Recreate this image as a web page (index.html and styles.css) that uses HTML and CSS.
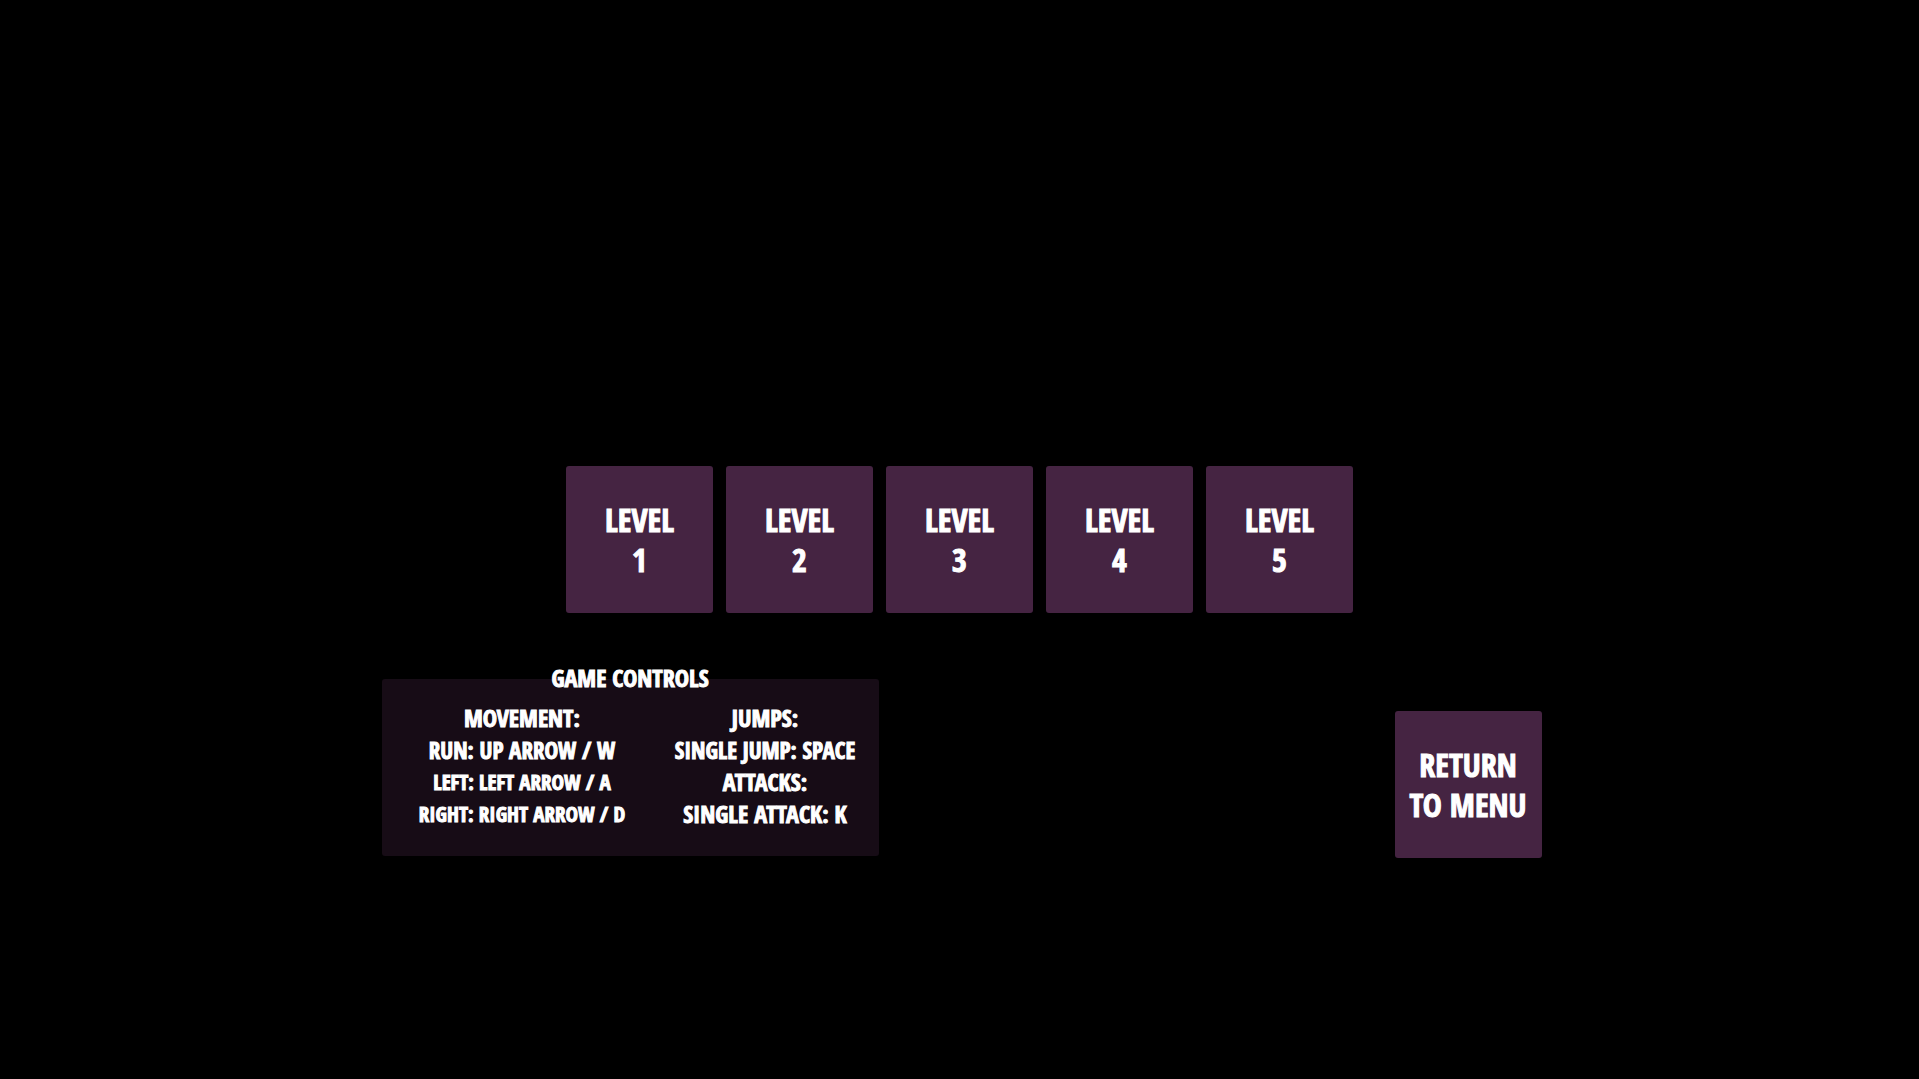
FILE: index.html
```html
<!DOCTYPE html>
<html lang="en">
<head>
<meta charset="utf-8">
<title>Level Select</title>
<link rel="stylesheet" href="styles.css">
</head>
<body>
<main class="screen">
  <nav class="levels" aria-label="Levels">
    <button class="tile" type="button">LEVEL<br>1</button>
    <button class="tile" type="button">LEVEL<br>2</button>
    <button class="tile" type="button">LEVEL<br>3</button>
    <button class="tile" type="button">LEVEL<br>4</button>
    <button class="tile" type="button">LEVEL<br>5</button>
  </nav>
  <div class="lower">
    <section class="controls">
      <h1 class="title">GAME CONTROLS</h1>
      <div class="columns">
        <div class="column">
          <h2 class="heading">MOVEMENT:</h2>
          <p class="line">RUN: UP ARROW / W</p>
          <p class="line small">LEFT: LEFT ARROW / A</p>
          <p class="line small">RIGHT: RIGHT ARROW / D</p>
        </div>
        <div class="column">
          <h2 class="heading">JUMPS:</h2>
          <p class="line">SINGLE JUMP: SPACE</p>
          <h2 class="heading">ATTACKS:</h2>
          <p class="line large">SINGLE ATTACK: K</p>
        </div>
      </div>
    </section>
    <button class="tile" type="button">RETURN<br>TO MENU</button>
  </div>
</main>
</body>
</html>
```
FILE: styles.css
```css
* {
  box-sizing: border-box;
}

body {
  margin: 0;
  background: #000;
  color: #fff;
  font-family: "Open Sans Condensed", "Liberation Sans Narrow", "Liberation Sans", sans-serif;
  font-weight: 700;
  -webkit-text-stroke: 1px #fff;
}

.screen {
  min-height: 100vh;
  padding: 466px 24px 0;
}

.levels {
  display: flex;
  justify-content: center;
  gap: 13px;
}

.tile {
  width: 147px;
  height: 147px;
  padding: 0;
  border: 0;
  border-radius: 3px;
  background: #452442;
  color: inherit;
  font: inherit;
  font-size: 32px;
  line-height: 40px;
  white-space: nowrap;
  cursor: pointer;
}

.lower {
  display: flex;
  justify-content: space-between;
  align-items: flex-end;
  max-width: 1164px;
  margin: 66px auto 0;
  padding-left: 4px;
}

.controls {
  width: 497px;
  height: 177px;
  margin-bottom: 2px;
  border-radius: 3px;
  background: #170c16;
  text-align: center;
  white-space: nowrap;
}

.title {
  margin: -17px 0 8px;
  font-size: 24px;
  line-height: 32px;
}

.columns {
  display: grid;
  grid-template-columns: 281px 205px;
}

.column {
  display: grid;
  grid-template-rows: repeat(4, 32px);
  justify-content: center;
}

.heading,
.line {
  margin: 0;
  font-size: 24px;
  line-height: 32px;
}

.line {
  font-size: 23px;
}

.small {
  font-size: 21px;
}

.large {
  font-size: 24px;
}
```
